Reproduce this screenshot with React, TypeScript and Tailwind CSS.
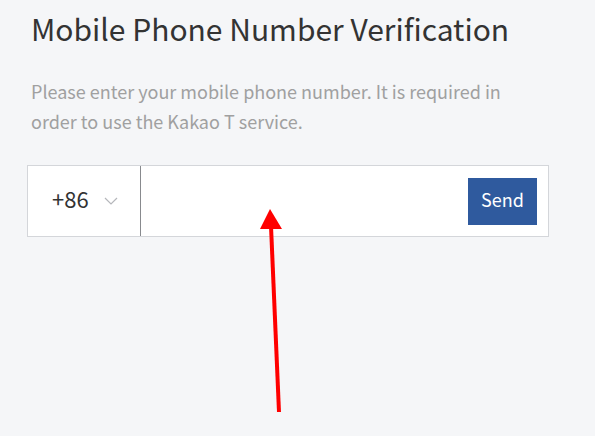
import React, { useState } from 'react';

export default function App() {
  const [phone, setPhone] = useState('');

  return (
    <div
      className="relative w-[595px] h-[436px] overflow-hidden bg-[#f5f6f8]"
      style={{ fontFamily: '"Noto Sans CJK KR", "Noto Sans", sans-serif' }}
    >
      <div className="pl-[27px] pt-[8px]">
        <h1 className="pl-[4px] text-[30px] leading-[40px] font-normal text-[#333333]">
          Mobile Phone Number Verification
        </h1>
        <p className="pl-[4px] mt-[28px] w-[520px] text-[18px] leading-[30px] text-[#a0a0a0]">
          Please enter your mobile phone number. It is required in order to use the Kakao T service.
        </p>

        <div className="mt-[29px] w-[522px] h-[72px] flex border border-[#d4d6da] bg-white">
          <button className="w-[113px] flex items-center pl-[24px] pb-[6px] gap-[15px] border-r border-[#888a8e]">
            <span className="text-[22px] text-[#333333]">+86</span>
            <svg className="mt-[5px]" width="14" height="8" viewBox="0 0 14 8" fill="none">
              <path d="M1 1l6 6 6-6" stroke="#b5b7bb" strokeWidth="1.2" />
            </svg>
          </button>
          <input
            value={phone}
            onChange={(e) => setPhone(e.target.value)}
            className="flex-1 min-w-0 px-4 outline-none text-[18px]"
          />
          <div className="flex items-center pr-[11px]">
            <button className="w-[69px] h-[47px] pb-[4px] bg-[#2f5a9e] text-white text-[18px]">Send</button>
          </div>
        </div>
      </div>

      <svg className="absolute left-0 top-0" width="595" height="436">
        <line x1="279" y1="412" x2="271" y2="226" stroke="#ff0000" strokeWidth="4" />
        <polygon points="270,209 260,229 282,229" fill="#ff0000" />
      </svg>
    </div>
  );
}
